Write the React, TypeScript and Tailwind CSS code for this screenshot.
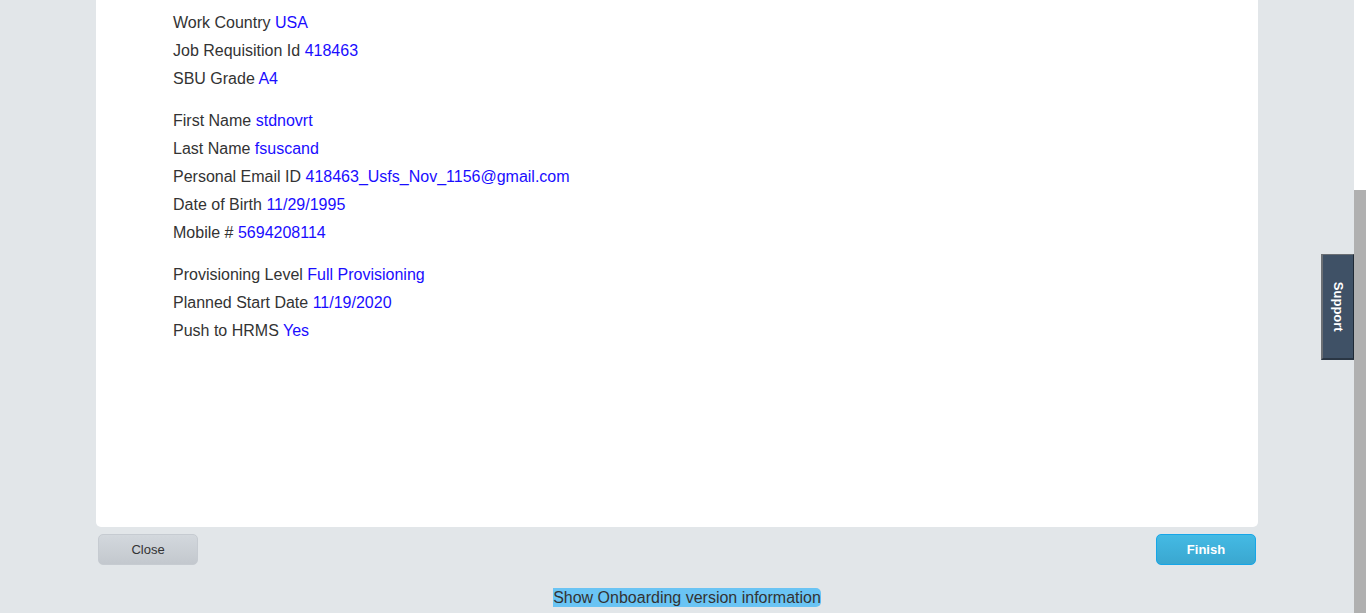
import React from "react";

const groups: [string, string][][] = [
  [
    ["Work Country", "USA"],
    ["Job Requisition Id", "418463"],
    ["SBU Grade", "A4"],
  ],
  [
    ["First Name", "stdnovrt"],
    ["Last Name", "fsuscand"],
    ["Personal Email ID", "418463_Usfs_Nov_1156@gmail.com"],
    ["Date of Birth", "11/29/1995"],
    ["Mobile #", "5694208114"],
  ],
  [
    ["Provisioning Level", "Full Provisioning"],
    ["Planned Start Date", "11/19/2020"],
    ["Push to HRMS", "Yes"],
  ],
];

export default function App() {
  return (
    <div className="flex h-[613px] w-[1366px] overflow-hidden bg-[#e2e6e9] font-['Liberation_Sans',Arial,sans-serif]">
      <div className="relative flex w-[1354px] flex-col">
        {/* summary card */}
        <div className="ml-[96px] h-[527px] w-[1162px] rounded-b-[5px] bg-white pl-[77px] pt-[9px]">
          {groups.map((g, i) => (
            <div key={i} className="mb-[14px]">
              {g.map(([label, value]) => (
                <div key={label} className="h-[28px] text-[16px] leading-[28px] text-[#333333]">
                  {label} <span className="text-[#1a0dff]">{value}</span>
                </div>
              ))}
            </div>
          ))}
        </div>

        {/* buttons */}
        <div className="mt-[7px] flex justify-between pl-[98px] pr-[98px]">
          <button className="h-[31px] w-[100px] rounded-[5px] border border-[#c6cbd1] bg-gradient-to-b from-[#d3d8dd] to-[#c3c8ce] text-[13px] text-[#333333]">
            Close
          </button>
          <button className="h-[31px] w-[100px] rounded-[5px] border border-[#16a6e8] bg-gradient-to-b from-[#44bae4] to-[#3aa7d0] text-[13px] font-bold text-white">
            Finish
          </button>
        </div>

        {/* version info */}
        <div className="mt-[23px] flex justify-center pl-[20px]">
          <span className="rounded-r-[5px] bg-[#6ac4f4] text-[16px] leading-[19px] text-[#333333]">
            Show Onboarding version information
          </span>
        </div>

        {/* support tab */}
        <div className="absolute right-0 top-[254px] flex h-[106px] w-[33px] items-center justify-center border-l-2 border-t border-[#6b6f74] border-r border-r-[#1f2a36] border-b-2 border-b-[#2a3644] bg-[#3f5166]">
          <span className="rotate-90 whitespace-nowrap text-[13px] font-bold text-white">Support</span>
        </div>
      </div>

      {/* scrollbar */}
      <div className="flex w-[12px] flex-col bg-white">
        <div className="h-[190px]" />
        <div className="flex-1 bg-[#b0b0b0]" />
      </div>
    </div>
  );
}
